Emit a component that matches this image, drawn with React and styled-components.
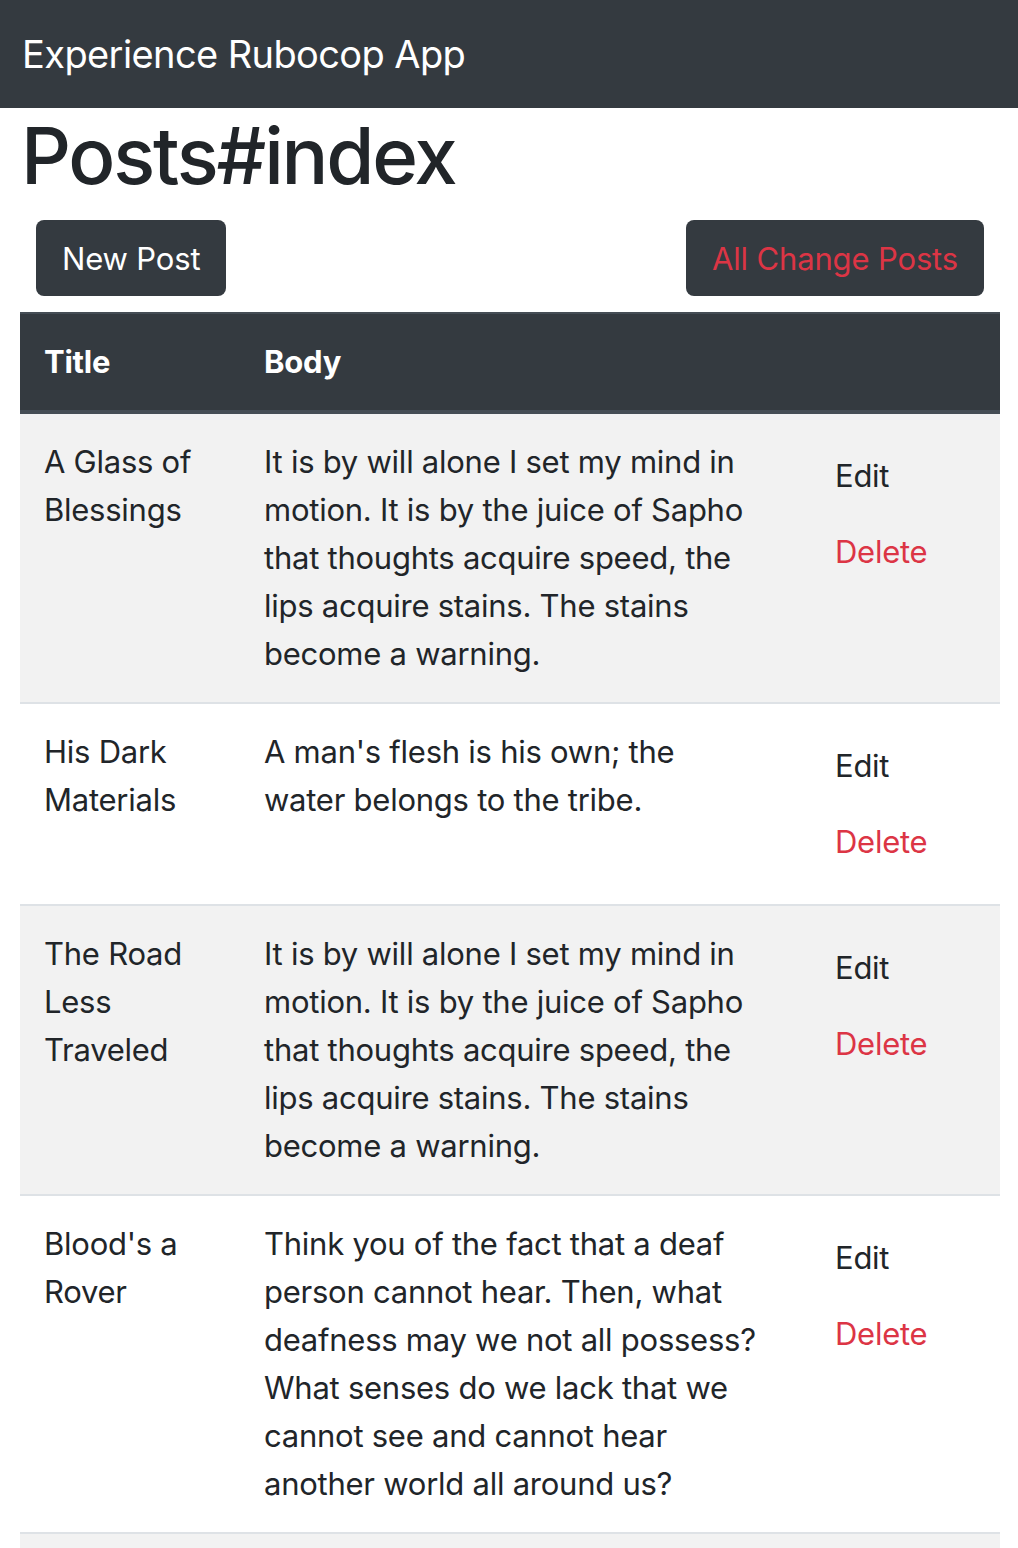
import React from "react";
import styled, { createGlobalStyle } from "styled-components";

const posts = [
  {
    id: 1,
    title: "A Glass of Blessings",
    body: "It is by will alone I set my mind in motion. It is by the juice of Sapho that thoughts acquire speed, the lips acquire stains. The stains become a warning.",
  },
  {
    id: 2,
    title: "His Dark Materials",
    body: "A man's flesh is his own; the water belongs to the tribe.",
  },
  {
    id: 3,
    title: "The Road Less Traveled",
    body: "It is by will alone I set my mind in motion. It is by the juice of Sapho that thoughts acquire speed, the lips acquire stains. The stains become a warning.",
  },
  {
    id: 4,
    title: "Blood's a Rover",
    body: "Think you of the fact that a deaf person cannot hear. Then, what deafness may we not all possess? What senses do we lack that we cannot see and cannot hear another world all around us?",
  },
  {
    id: 5,
    title: "Vile Bodies",
    body: "The mystery of life isn't a problem to solve, but a reality to experience.",
  },
];

function App() {
  return (
    <>
      <GlobalStyle />
      <Navbar>
        <Brand href="#">Experience Rubocop App</Brand>
      </Navbar>
      <Main>
        <PageTitle>Posts#index</PageTitle>
        <ButtonBar>
          <DarkButton>New Post</DarkButton>
          <DarkButton danger>All Change Posts</DarkButton>
        </ButtonBar>
        <PostsTable>
          <colgroup>
            <col style={{ width: 220 }} />
            <col style={{ width: 544 }} />
            <col />
          </colgroup>
          <thead>
            <tr>
              <HeadCell>Title</HeadCell>
              <HeadCell>Body</HeadCell>
              <HeadCell />
            </tr>
          </thead>
          <tbody>
            {posts.map((post) => (
              <Row key={post.id}>
                <Cell>{post.title}</Cell>
                <Cell>{post.body}</Cell>
                <Cell>
                  <Actions>
                    <LinkButton>Edit</LinkButton>
                    <LinkButton danger>Delete</LinkButton>
                  </Actions>
                </Cell>
              </Row>
            ))}
          </tbody>
        </PostsTable>
      </Main>
    </>
  );
}

const GlobalStyle = createGlobalStyle`
  body {
    margin: 0;
    font-family: Inter, "Noto Sans", sans-serif;
    color: #212529;
    background: #fff;
  }
`;

const Navbar = styled.nav`
  height: 108px;
  background: #343a40;
  display: flex;
  align-items: center;
  padding: 0 22px;
  box-sizing: border-box;
`;

const Brand = styled.a`
  color: #fff;
  font-size: 38px;
  letter-spacing: -0.6px;
  text-decoration: none;
  line-height: 1.5;
`;

const Main = styled.main`
  padding: 0 18px 0 20px;
`;

const PageTitle = styled.h1`
  margin: 0 0 16px 1px;
  font-size: 78px;
  font-weight: 500;
  letter-spacing: -2.2px;
  line-height: 96px;
`;

const ButtonBar = styled.div`
  display: flex;
  justify-content: space-between;
  padding: 0 16px;
  margin-bottom: 16px;
`;

const DarkButton = styled.button`
  height: 76px;
  padding: 0 26px;
  border: none;
  border-radius: 8px;
  background: #343a40;
  color: ${(p) => (p.danger ? "#dc3545" : "#fff")};
  font-family: inherit;
  font-size: 31px;
  letter-spacing: -0.15px;
`;

const PostsTable = styled.table`
  width: 980px;
  border-collapse: collapse;
  table-layout: fixed;
  font-size: 31px;
  letter-spacing: -0.25px;
  line-height: 48px;
`;

const HeadCell = styled.th`
  background: #343a40;
  color: #fff;
  text-align: left;
  font-weight: 700;
  padding: 24px;
  border-top: 2px solid #454d55;
  border-bottom: 4px solid #454d55;
`;

const Row = styled.tr`
  &:nth-child(odd) {
    background: #f2f2f2;
  }
  & + & {
    border-top: 2px solid #dee2e6;
  }
`;

const Cell = styled.td`
  padding: 24px;
  vertical-align: top;
`;

const Actions = styled.div`
  display: flex;
  flex-direction: column;
  align-items: flex-start;
`;

const LinkButton = styled.a`
  display: block;
  padding: 14px 20px 14px 27px;
  color: ${(p) => (p.danger ? "#dc3545" : "#212529")};
  cursor: pointer;
`;

export default App;
